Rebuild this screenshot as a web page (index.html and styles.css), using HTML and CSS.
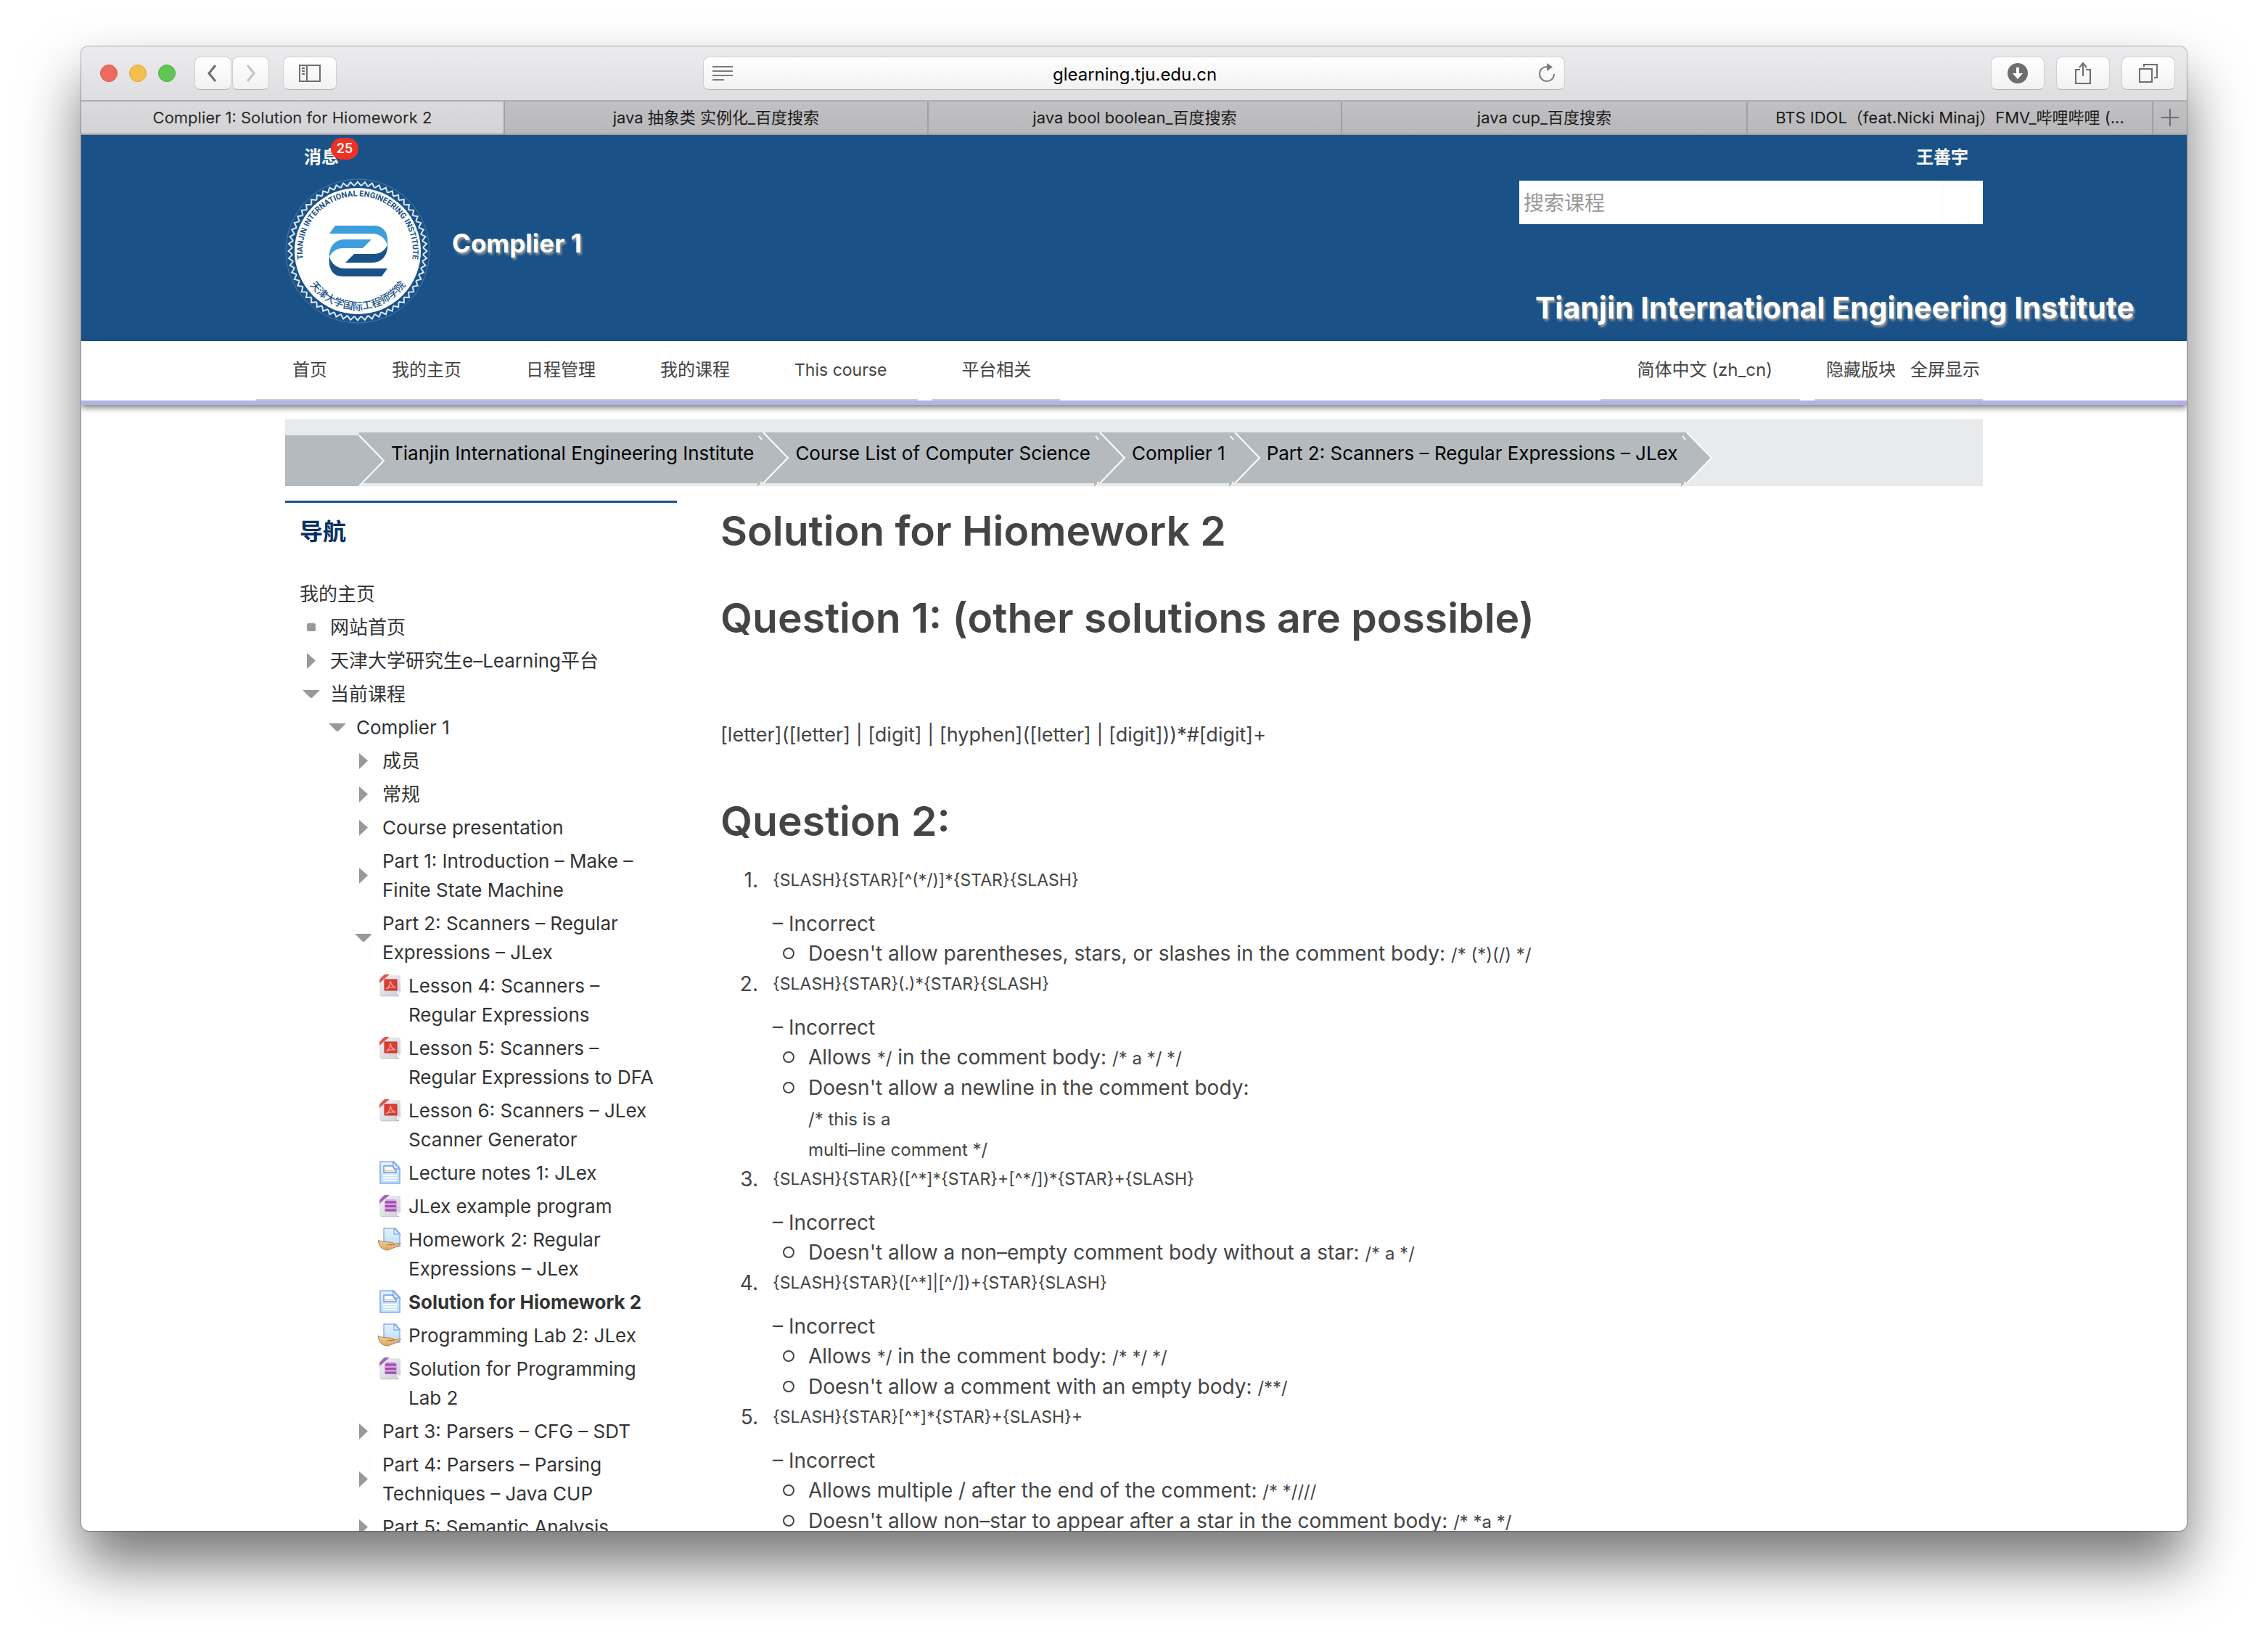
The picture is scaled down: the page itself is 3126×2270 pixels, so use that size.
FILE: index.html
```html
<!DOCTYPE html>
<html lang="zh-CN">
<head>
<meta charset="utf-8">
<title>Complier 1: Solution for Hiomework 2</title>
<link rel="stylesheet" href="styles.css">
</head>
<body>
<svg class="defs" aria-hidden="true">
  <defs>
    <linearGradient id="g-sheet" x1="0" y1="0" x2="1" y2="1"><stop offset="0" stop-color="#f4f4f6"/><stop offset="1" stop-color="#cbcbd6"/></linearGradient>
    <linearGradient id="g-blue" x1="0" y1="0" x2="0" y2="1"><stop offset="0" stop-color="#e6f3fc"/><stop offset="1" stop-color="#b9dcf5"/></linearGradient>
    <linearGradient id="g-hand" x1="0" y1="0" x2="0" y2="1"><stop offset="0" stop-color="#f4cf9c"/><stop offset="1" stop-color="#dba566"/></linearGradient>
    <symbol id="i-pdf" viewBox="0 0 32 32">
      <path d="M4 30.500h25" stroke="#b9b9bd" stroke-width="1.500"/>
      <path d="M5 3h25l1 21-6 6H3V12z" fill="url(#g-sheet)" stroke="#d8d8df"/>
      <path d="M25 30l1-6h5z" fill="#fff" stroke="#c0c0ca" stroke-width=".8"/>
      <path d="M2 8L9 1h7L2 13z" fill="#e2574c"/>
      <path d="M9 8h17v15H9z" fill="#dd3c30" stroke="#c22f26"/>
      <path d="M11 21c4-2 6-6 6-11 1 5 3 8 7 9-5-1-9 0-13 2z" fill="none" stroke="#f3aaa1" stroke-width="1.300"/>
    </symbol>
    <symbol id="i-archive" viewBox="0 0 32 32">
      <path d="M4 30.500h25" stroke="#b9b9bd" stroke-width="1.500"/>
      <path d="M5 3h25l1 21-6 6H3V12z" fill="url(#g-sheet)" stroke="#d8d8df"/>
      <path d="M25 30l1-6h5z" fill="#fff" stroke="#c0c0ca" stroke-width=".8"/>
      <path d="M2 8L9 1h7L2 13z" fill="#a565b5"/>
      <path d="M11 7h13v2h2v15H9V9h2z" fill="#d9a3dc"/>
      <path d="M10 11h15M10 16.500h15M10 22h15" stroke="#9a4fae" stroke-width="3"/>
    </symbol>
    <symbol id="i-page" viewBox="0 0 32 32">
      <path d="M3 1h19l8 9v21H3z" fill="url(#g-blue)" stroke="#86aeee" stroke-width="1.600"/>
      <path d="M20 1l10 10h-8z" fill="#dcecfb" stroke="#86aeee" stroke-width="1.400"/>
      <path d="M8 7h12l3 5h2v4H8z" fill="#fff" stroke="#6b98e6" stroke-width="1.400"/>
      <path d="M9 13.500h15" stroke="#ecd9a0" stroke-width="2"/>
      <path d="M7 20h19M7 23.500h19M7 27h19" stroke="#fff" stroke-width="2"/>
    </symbol>
    <symbol id="i-assign" viewBox="0 0 32 32">
      <path d="M8 1h16l6 7v18H8z" fill="url(#g-blue)" stroke="#86aeee" stroke-width="1.400"/>
      <path d="M22 1v8h8z" fill="#e8f4fd" stroke="#86aeee" stroke-width="1.300"/>
      <path d="M0 17l5 2 9 1c4 0 9 1 9 3l-6 1 14-3c1 1-2 3-5 5l-12 5c-5 0-9-2-11-5l-2-4z" fill="url(#g-hand)" stroke="#b57f48"/>
      <path d="M12 24l7-1" stroke="#b57f48" stroke-width="1"/>
    </symbol>
    <symbol id="i-closed" viewBox="0 0 24 24"><path d="M6 1l12 10.500L6 23z" fill="#999"/></symbol>
    <symbol id="i-open" viewBox="0 0 24 24"><path d="M0 6h24L14 16q-2 2-4 0z" fill="#999"/></symbol>
    <symbol id="i-item" viewBox="0 0 24 24"><rect x="6" y="6" width="12" height="11" rx="2" fill="#999"/></symbol>
    <symbol id="i-chevron" viewBox="0 0 48 76">
      <path d="M10 0L44 35 10 70z" fill="#b4babe"/>
      <path d="M10 0L44 35 10 70" fill="none" stroke="#fff" stroke-width="2"/>
      <path d="M4 5l4 5M4 74l4-6" stroke="#fff" stroke-width="2"/>
      <path d="M2 70h5l-5 5z" fill="#b4babe"/>
    </symbol>
    <symbol id="i-chevron-home" viewBox="0 0 48 76">
      <path d="M10 0L44 35 10 70z" fill="#b4babe"/>
      <path d="M10 0L44 35 10 70" fill="none" stroke="#fff" stroke-width="2"/>
    </symbol>
    <path id="tooth" d="M95.290 10.120L100 4.500l4.710 5.620"/>
    <g id="teeth5"><use href="#tooth"/><use href="#tooth" transform="rotate(6 100 100)"/><use href="#tooth" transform="rotate(12 100 100)"/><use href="#tooth" transform="rotate(18 100 100)"/><use href="#tooth" transform="rotate(24 100 100)"/></g>
    <g id="teeth15"><use href="#teeth5"/><use href="#teeth5" transform="rotate(30 100 100)"/><use href="#teeth5" transform="rotate(60 100 100)"/></g>
    <path id="arc-top" d="M27 121.500A76 76 0 1 1 173 121.500"/>
    <path id="arc-bottom" d="M31 142A81 81 0 0 0 169 142"/>
    <g id="swoosh">
      <path d="M61 76l8-11h54c14 0 20 12 18 27-3-10-11-16-21-16z"/>
      <path d="M119 84H82c-14 0-22 11-21 25 3-9 11-13 19-13h27z"/>
    </g>
  </defs>
</svg>

<div class="window">
  <div class="toolbar">
    <div class="tools">
      <span class="light red"></span><span class="light yellow"></span><span class="light green"></span>
      <div class="pair">
        <button class="tool back" aria-label="Back"><svg width="16" height="24" viewBox="0 0 16 24"><path d="M13 1L4 12l9 11" fill="none" stroke="#6e6e6e" stroke-width="3"/></svg></button>
        <button class="tool forward" aria-label="Forward"><svg width="16" height="24" viewBox="0 0 16 24"><path d="M3 1l9 11-9 11" fill="none" stroke="#c3c3c3" stroke-width="3"/></svg></button>
      </div>
      <button class="tool side" aria-label="Sidebar"><svg width="30" height="24" viewBox="0 0 30 24"><path d="M1 1h28v22H1zM11 1v22M4 5h4M4 9h4M4 13h4" fill="none" stroke="#6e6e6e" stroke-width="2"/></svg></button>
    </div>
    <div class="address">
      <button class="plain" aria-label="Reader"><svg width="28" height="20" viewBox="0 0 28 20"><path d="M0 1h28M0 7h28M0 13h28M0 19h16" stroke="#7b7b7b" stroke-width="2"/></svg></button>
      <input class="url" type="text" value="glearning.tju.edu.cn" aria-label="Address">
      <button class="plain" aria-label="Reload"><svg width="28" height="28" viewBox="0 0 28 28"><path d="M15 5A10 10 0 1 0 24 15" fill="none" stroke="#7b7b7b" stroke-width="2"/><path d="M14 0l8 5.500-8 5.500z" fill="#7b7b7b"/></svg></button>
    </div>
    <div class="tools end">
      <button class="tool side" aria-label="Downloads"><svg width="28" height="28" viewBox="0 0 28 28"><circle cx="14" cy="14" r="14" fill="#6e6e6e"/><path d="M12 6h4v8h5l-7 8-7-8h5z" fill="#fff"/></svg></button>
      <button class="tool side" aria-label="Share"><svg width="24" height="32" viewBox="0 0 24 32"><path d="M8 11H2v19h20V11h-6M12 20V3M7 8l5-6 5 6" fill="none" stroke="#6e6e6e" stroke-width="2"/></svg></button>
      <button class="tool side" aria-label="Tabs"><svg width="26" height="26" viewBox="0 0 26 26"><path d="M1 7h17v18H1zM7 4V1h18v18h-4" fill="none" stroke="#6e6e6e" stroke-width="2"/></svg></button>
    </div>
  </div>
  <div class="tabs">
    <a class="tab current" href="#">Complier 1: Solution for Hiomework 2</a>
    <a class="tab second" href="#">java 抽象类 实例化_百度搜索</a>
    <a class="tab third" href="#">java bool boolean_百度搜索</a>
    <a class="tab" href="#">java cup_百度搜索</a>
    <a class="tab" href="#">BTS IDOL（feat.Nicki Minaj）FMV_哔哩哔哩 (...</a>
    <button class="new-tab" aria-label="New tab"><svg width="24" height="24" viewBox="0 0 24 24"><path d="M12 0v24M0 12h24" stroke="#6e6e6e" stroke-width="2"/></svg></button>
  </div>

  <div class="viewport">
    <header class="banner">
      <div class="wrap">
        <div class="account">
          <a class="messages" href="#">消息<span class="badge">25</span></a>
          <a href="#">王善宇</a>
        </div>
        <div class="brand">
          <svg class="logo" viewBox="0 0 200 200" role="img" aria-label="Tianjin International Engineering Institute">
            <circle cx="100" cy="100" r="99" fill="none" stroke="#7fa3c4" stroke-opacity=".5" stroke-width="1"/>
            <g fill="none" stroke="#dbe8f2" stroke-width="2"><use href="#teeth15"/><use href="#teeth15" transform="rotate(90 100 100)"/><use href="#teeth15" transform="rotate(180 100 100)"/><use href="#teeth15" transform="rotate(270 100 100)"/></g>
            <circle cx="100" cy="100" r="87" fill="#fff"/>
            <text class="seal-en"><textPath href="#arc-top" startOffset="50%">TIANJIN INTERNATIONAL ENGINEERING INSTITUTE</textPath></text>
            <text class="seal-zh"><textPath href="#arc-bottom" startOffset="50%">天津大学国际工程师学院</textPath></text>
            <use href="#swoosh" fill="#3d9edc"/>
            <use href="#swoosh" fill="#1a5288" transform="rotate(180 101 100)"/>
          </svg>
          <h1 class="course">Complier 1</h1>
          <div class="brand-side">
            <form class="search"><input type="search" placeholder="搜索课程" aria-label="搜索课程"><button type="button" aria-label="搜索"></button></form>
            <div class="institute">Tianjin International Engineering Institute</div>
          </div>
        </div>
      </div>
    </header>
    <nav class="menu">
      <div class="wrap menu-row">
        <div class="menu-group first">
          <a href="#">首页</a><a href="#">我的主页</a><a href="#">日程管理</a><a href="#">我的课程</a><a href="#">This course</a>
        </div>
        <div class="menu-group platform"><a href="#">平台相关</a></div>
        <div class="menu-group lang"><a href="#">简体中文 ‎(zh_cn)‎</a></div>
        <div class="menu-group toggles"><a href="#">隐藏版块</a><a href="#">全屏显示</a></div>
      </div>
    </nav>

    <div class="wrap">
      <nav class="crumbs" aria-label="Breadcrumb">
        <ol>
          <li class="home"><svg class="chevron" aria-hidden="true"><use href="#i-chevron-home"/></svg></li>
          <li><a href="#">Tianjin International Engineering Institute</a><svg class="chevron" aria-hidden="true"><use href="#i-chevron"/></svg></li>
          <li><a href="#">Course List of Computer Science</a><svg class="chevron" aria-hidden="true"><use href="#i-chevron"/></svg></li>
          <li><a href="#">Complier 1</a><svg class="chevron" aria-hidden="true"><use href="#i-chevron"/></svg></li>
          <li><a href="#">Part 2: Scanners – Regular Expressions – JLex</a><svg class="chevron" aria-hidden="true"><use href="#i-chevron"/></svg></li>
        </ol>
      </nav>

      <div class="columns">
        <aside class="sidebar">
          <h2>导航</h2>
          <ul class="tree">
            <li><a class="node root" href="#">我的主页</a>
              <ul>
                <li><a class="node" href="#"><svg class="mark"><use href="#i-item"/></svg>网站首页</a></li>
                <li><a class="node" href="#"><svg class="mark"><use href="#i-closed"/></svg>天津大学研究生e–Learning平台</a></li>
                <li><a class="node" href="#"><svg class="mark"><use href="#i-open"/></svg>当前课程</a>
                  <ul>
                    <li><a class="node" href="#"><svg class="mark"><use href="#i-open"/></svg>Complier 1</a>
                      <ul>
                        <li><a class="node" href="#"><svg class="mark"><use href="#i-closed"/></svg>成员</a></li>
                        <li><a class="node" href="#"><svg class="mark"><use href="#i-closed"/></svg>常规</a></li>
                        <li><a class="node" href="#"><svg class="mark"><use href="#i-closed"/></svg>Course presentation</a></li>
                        <li><a class="node" href="#"><svg class="mark"><use href="#i-closed"/></svg>Part 1: Introduction – Make – Finite State Machine</a></li>
                        <li><a class="node" href="#"><svg class="mark"><use href="#i-open"/></svg>Part 2: Scanners – Regular Expressions – JLex</a>
                          <ul>
                            <li><a class="node file" href="#"><svg class="mark"><use href="#i-pdf"/></svg>Lesson 4: Scanners – Regular Expressions</a></li>
                            <li><a class="node file" href="#"><svg class="mark"><use href="#i-pdf"/></svg>Lesson 5: Scanners – Regular Expressions to DFA</a></li>
                            <li><a class="node file" href="#"><svg class="mark"><use href="#i-pdf"/></svg>Lesson 6: Scanners – JLex Scanner Generator</a></li>
                            <li><a class="node file" href="#"><svg class="mark"><use href="#i-page"/></svg>Lecture notes 1: JLex</a></li>
                            <li><a class="node file" href="#"><svg class="mark"><use href="#i-archive"/></svg>JLex example program</a></li>
                            <li><a class="node file" href="#"><svg class="mark"><use href="#i-assign"/></svg>Homework 2: Regular Expressions – JLex</a></li>
                            <li><a class="node file active" href="#"><svg class="mark"><use href="#i-page"/></svg>Solution for Hiomework 2</a></li>
                            <li><a class="node file" href="#"><svg class="mark"><use href="#i-assign"/></svg>Programming Lab 2: JLex</a></li>
                            <li><a class="node file" href="#"><svg class="mark"><use href="#i-archive"/></svg>Solution for Programming Lab 2</a></li>
                          </ul>
                        </li>
                        <li><a class="node" href="#"><svg class="mark"><use href="#i-closed"/></svg>Part 3: Parsers – CFG – SDT</a></li>
                        <li><a class="node" href="#"><svg class="mark"><use href="#i-closed"/></svg>Part 4: Parsers – Parsing Techniques – Java CUP</a></li>
                        <li><a class="node" href="#"><svg class="mark"><use href="#i-closed"/></svg>Part 5: Semantic Analysis</a></li>
                      </ul>
                    </li>
                  </ul>
                </li>
              </ul>
            </li>
          </ul>
        </aside>

        <main class="article">
          <h2>Solution for Hiomework 2</h2>
          <h2>Question 1: (other solutions are possible)</h2>
          <p class="answer">[letter]([letter] | [digit] | [hyphen]([letter] | [digit]))*#[digit]+</p>
          <h2>Question 2:</h2>
          <ol class="answers">
            <li><div><code>{SLASH}{STAR}[^(*/)]*{STAR}{SLASH}</code>
              <p>– Incorrect</p>
              <ul>
                <li>Doesn't allow parentheses, stars, or slashes in the comment body: <code>/* (*)(/) */</code></li>
              </ul></div></li>
            <li><div><code>{SLASH}{STAR}(.)*{STAR}{SLASH}</code>
              <p>– Incorrect</p>
              <ul>
                <li>Allows <code>*/</code> in the comment body: <code>/* a */ */</code></li>
                <li>Doesn't allow a newline in the comment body:<br><code>/* this is a</code><br><code>multi–line comment */</code></li>
              </ul></div></li>
            <li><div><code>{SLASH}{STAR}([^*]*{STAR}+[^*/])*{STAR}+{SLASH}</code>
              <p>– Incorrect</p>
              <ul>
                <li>Doesn't allow a non–empty comment body without a star: <code>/* a */</code></li>
              </ul></div></li>
            <li><div><code>{SLASH}{STAR}([^*]|[^/])+{STAR}{SLASH}</code>
              <p>– Incorrect</p>
              <ul>
                <li>Allows <code>*/</code> in the comment body: <code>/* */ */</code></li>
                <li>Doesn't allow a comment with an empty body: <code>/**/</code></li>
              </ul></div></li>
            <li><div><code>{SLASH}{STAR}[^*]*{STAR}+{SLASH}+</code>
              <p>– Incorrect</p>
              <ul>
                <li>Allows multiple / after the end of the comment: <code>/* *////</code></li>
                <li>Doesn't allow non–star to appear after a star in the comment body: <code>/* *a */</code></li>
              </ul></div></li>
          </ol>
        </main>
      </div>
    </div>
  </div>
</div>
</body>
</html>
```
FILE: styles.css
```css
* { box-sizing: border-box; }
body {
  margin: 0;
  padding: 64px 112px 160px;
  height: 100vh;
  background: #fff;
  color: #444;
  font: 26px/40px Inter, "Noto Sans CJK SC", sans-serif;
  overflow: hidden;
}
a { color: inherit; text-decoration: none; }
ul, ol { list-style: none; margin: 0; padding: 0; }
h1, h2, p { margin: 0; }
button, input { font: inherit; padding: 0; border: 0; background: none; outline: 0; }
svg { display: block; flex: none; }
.defs { position: absolute; width: 0; height: 0; }

/* Browser window */
.window {
  display: flex;
  flex-direction: column;
  height: 100%;
  border-radius: 10px;
  overflow: hidden;
  background: #fff;
  box-shadow: 0 0 1px 1px rgba(0, 0, 0, .28), 0 46px 80px rgba(0, 0, 0, .54);
}
.toolbar {
  flex: none;
  display: grid;
  grid-template-columns: 1fr minmax(0, 1188px) 1fr;
  align-items: center;
  height: 76px;
  background: linear-gradient(#ececee, #dedee0);
  border-bottom: 2px solid #adadaf;
}
.tools { display: flex; align-items: center; padding-left: 26px; }
.tools.end { justify-content: flex-end; gap: 16px; padding: 0 16px 0 0; }
.light { width: 24px; height: 24px; margin-right: 16px; border-radius: 50%; border: 1px solid; }
.red { background: #ee6a5e; border-color: #d9564b; }
.yellow { background: #f5bf4f; border-color: #dba33c; }
.green { background: #61c454; border-color: #50a945; }
.pair { display: flex; gap: 1px; margin: 0 19px 0 10px; }
.tool, .address {
  height: 46px;
  border-radius: 8px;
  border: 1px solid #cfcfd1;
  border-bottom-color: #b0b0b2;
  background: linear-gradient(#fff, #f2f2f2);
}
.tool { display: flex; align-items: center; justify-content: center; width: 51px; }
.back { padding-right: 4px; }
.tool.side { width: 74px; }
.address { display: flex; align-items: center; padding: 0 10px 0 12px; }
.url { flex: 1; min-width: 0; height: 44px; padding-top: 2px; text-align: center; font-size: 24px; color: #000; }

.tabs {
  flex: none;
  display: flex;
  height: 46px;
  background: linear-gradient(#c1c1c3, #b8b8ba);
  border-bottom: 2px solid #a0a0a2;
  font-size: 22px;
  line-height: 44px;
  color: #1a1a1a;
}
.tab {
  flex: 560 1 0;
  min-width: 0;
  padding: 0 20px;
  text-align: center;
  white-space: nowrap;
  overflow: hidden;
  border-right: 2px solid #a0a0a2;
}
.tab.current, .tab.second { flex-grow: 587; }
.tab.third { flex-grow: 572; }
.tab.current { color: #2a2a2a; background: linear-gradient(#dbdbdd, #d3d3d5); }
.new-tab { display: flex; align-items: center; justify-content: center; width: 46px; }

/* Page */
.viewport { flex: 1; min-height: 0; overflow: hidden; }
.wrap { width: 100%; max-width: 2340px; margin: 0 auto; }

.banner { background: #1a5288; color: #fff; padding-bottom: 21px; }
.account {
  display: flex;
  justify-content: space-between;
  height: 60px;
  padding: 0 20px 0 26px;
  font-size: 24px;
  font-weight: 700;
  line-height: 62px;
}
.messages { position: relative; }
.badge {
  position: absolute;
  left: 37px;
  top: 4px;
  width: 38px;
  height: 30px;
  border-radius: 15px;
  background: #ee3124;
  font-size: 18px;
  font-weight: 600;
  line-height: 30px;
  text-align: center;
}
.brand { display: flex; align-items: flex-start; }
.logo { width: 200px; height: 200px; margin-right: 30px; }
.seal-en, .seal-zh { fill: #1a5288; text-anchor: middle; }
.seal-en { font: 700 11px Roboto, sans-serif; }
.seal-zh { font: 500 14px "Noto Sans CJK SC", sans-serif; }
.course, .institute { white-space: nowrap; text-shadow: 2px 3px 3px #999; font-weight: 700; }
.course { flex: 1; font-size: 35px; line-height: 178px; }
.brand-side { width: 639px; padding-top: 3px; }
.search { display: flex; height: 60px; background: #fff; }
.search input { flex: 1; min-width: 0; padding: 2px 0 0 6px; font-size: 28px; color: #444; }
.search input::placeholder { color: #999; opacity: 1; }
.search button { width: 56px; border: 1px solid #fafafa; }
.institute { padding: 90px 0 0 22px; font-size: 41px; line-height: 50px; }

.menu { border-bottom: 6px solid #b3b1e6; box-shadow: 0 4px 8px rgba(0, 0, 0, .5); }
.menu-row { display: flex; }
.menu-group {
  display: flex;
  border-bottom: 2px solid #ccc;
  font-size: 24px;
  line-height: 80px;
  white-space: nowrap;
}
.first { gap: 89px; margin-left: -40px; padding: 0 43px 0 50px; }
.first a:last-child { font-size: 23px; }
.platform { margin-left: 20px; padding: 0 40px; }
.lang { margin-left: auto; padding: 0 38px 0 50px; }
.toggles { gap: 20px; margin-left: 20px; padding: 0 4px 0 16px; }

.crumbs { margin-top: 20px; height: 92px; padding-top: 18px; background: #e9eaeb; }
.crumbs ol { display: flex; align-items: flex-start; }
.crumbs li {
  position: relative;
  height: 70px;
  padding: 0 13px 0 44px;
  background: #b4babe;
  color: #000;
  line-height: 58px;
  white-space: nowrap;
}
.crumbs .home { width: 102px; margin-top: 4px; padding: 0; }
.chevron { position: absolute; z-index: 1; top: 0; right: -38px; width: 48px; height: 76px; }

.columns { display: flex; gap: 60px; margin-top: 20px; }
.sidebar { flex: none; width: 540px; padding: 20px; border-top: 3px solid #1a5288; color: #333; }
.sidebar h2 { margin-bottom: 43px; color: #052f63; font-size: 32px; line-height: 40px; }
.tree ul ul { padding-left: 36px; }
.node { display: flex; align-items: center; padding: 3px 0; }
.mark { width: 24px; height: 24px; margin: 0 14px 0 4px; }
.file { align-items: flex-start; }
.file .mark { width: 32px; height: 32px; margin: 3px 10px 0 0; }
.active { font-weight: 700; }

.article { flex: 1; min-width: 0; padding-top: 2px; font-size: 28px; line-height: 42px; }
.article h2 { margin-bottom: 40px; font-size: 57px; font-weight: 600; line-height: 80px; }
.answer { margin: 100px 0 58px; font-size: 27px; }
.article .answer + h2 { margin-bottom: 20px; }
.answers { counter-reset: answer; }
.answers > li { display: grid; grid-template-columns: 52px 1fr; gap: 20px; counter-increment: answer; }
.answers > li::before { content: counter(answer) "."; text-align: right; }
.article code { font-family: Inter, sans-serif; font-size: 24px; line-height: 24px; }
.article div > code { display: block; font-size: 23px; line-height: 42px; }
.answers p { margin-top: 20px; line-height: 39px; }
.answers ul li { position: relative; padding-left: 49px; }
.answers ul li::before {
  content: "";
  position: absolute;
  left: 14px;
  top: 13px;
  width: 12px;
  height: 12px;
  border: 2px solid #444;
  border-radius: 50%;
}
```
